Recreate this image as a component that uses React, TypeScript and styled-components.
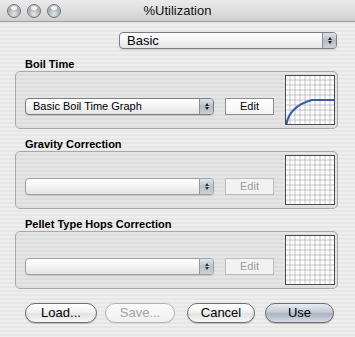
import React from 'react';
import styled, { createGlobalStyle, css } from 'styled-components';

const GlobalStyle = createGlobalStyle`
    html, body {
        margin: 0;
        padding: 0;
        background: #ececec;
    }
    body {
        font-family: "Liberation Sans", "DejaVu Sans", sans-serif;
        color: #000;
    }
`;

const Window = styled.div`
    width: 355px;
    height: 337px;
    display: flex;
    flex-direction: column;
    overflow: hidden;
    background: repeating-linear-gradient(
        to bottom,
        #eeeeee 0px,
        #eeeeee 2px,
        #e6e6e6 2px,
        #e6e6e6 4px
    );
`;

const TitleBar = styled.div`
    height: 21px;
    border-bottom: 1px solid #9c9c9c;
    display: flex;
    align-items: center;
    padding-left: 7px;
    gap: 6px;
    position: relative;
    background: linear-gradient(to bottom, #eaeaea 0%, #dedede 50%, #cfcfcf 100%);
`;

const Light = styled.span`
    width: 14px;
    height: 14px;
    border-radius: 50%;
    box-sizing: border-box;
    border: 1px solid #6f7378;
    background: radial-gradient(
        circle at 50% 75%,
        #e4e7ea 0%,
        #a9afb5 55%,
        #8a9096 100%
    );
    box-shadow: inset 0 1px 0 rgba(255, 255, 255, 0.6);
    position: relative;
    &::after {
        content: '';
        position: absolute;
        left: 3px;
        top: 1px;
        width: 6px;
        height: 4px;
        border-radius: 50%;
        background: rgba(255, 255, 255, 0.85);
    }
`;

const Title = styled.div`
    position: absolute;
    left: 0;
    right: 0;
    top: 3px;
    text-align: center;
    font-size: 13px;
    color: #111;
    pointer-events: none;
`;

const Content = styled.div`
    display: flex;
    flex-direction: column;
    padding: 10px 17px 0 15px;
`;

const TopRow = styled.div`
    display: flex;
    justify-content: flex-end;
    padding-right: 1px;
`;

const Popup = styled.div<{ $width: number; $disabled?: boolean }>`
    width: ${(p) => p.$width}px;
    height: 17px;
    box-sizing: border-box;
    border: 1px solid ${(p) => (p.$disabled ? '#a0a0a0' : '#7d7d7d')};
    border-radius: 4px;
    display: flex;
    overflow: hidden;
    background: linear-gradient(to bottom, #ffffff 0%, #f4f4f4 50%, #e4e4e4 100%);
    box-shadow: 0 1px 1px rgba(0, 0, 0, 0.12);
`;

const PopupLabel = styled.div<{ $size: number }>`
    flex: 1;
    font-size: ${(p) => p.$size}px;
    line-height: 15px;
    padding-left: 7px;
    white-space: nowrap;
`;

const PopupArrows = styled.div<{ $disabled?: boolean }>`
    width: 13px;
    border-left: 1px solid #8a9098;
    display: flex;
    flex-direction: column;
    align-items: center;
    justify-content: center;
    gap: 1px;
    background: linear-gradient(to bottom, #dfe4ea 0%, #b4bcc6 50%, #c9d0d8 100%);
    ${(p) =>
        p.$disabled &&
        css`
            opacity: 0.9;
        `}
`;

const Arrow = styled.span<{ $up?: boolean }>`
    width: 0;
    height: 0;
    border-left: 2.5px solid transparent;
    border-right: 2.5px solid transparent;
    ${(p) =>
        p.$up
            ? css`border-bottom: 3px solid #222;`
            : css`border-top: 3px solid #222;`}
`;

const Section = styled.div<{ $top: number }>`
    display: flex;
    flex-direction: column;
    margin-top: ${(p) => p.$top}px;
`;

const SectionLabel = styled.div`
    font-size: 11px;
    font-weight: bold;
    line-height: 12px;
    padding-left: 10px;
    margin-bottom: 1px;
`;

const GroupBox = styled.div`
    height: 58px;
    box-sizing: border-box;
    border: 1px solid #a9a9a9;
    border-radius: 5px;
    background: rgba(0, 0, 0, 0.035);
    display: flex;
    align-items: flex-end;
    padding: 3px 2px 3px 9px;
    gap: 11px;
`;

const Controls = styled.div`
    display: flex;
    gap: 11px;
    align-items: center;
    margin-bottom: 10px;
`;

const EditButton = styled.div<{ $disabled?: boolean }>`
    width: 49px;
    height: 17px;
    box-sizing: border-box;
    border: 1px solid ${(p) => (p.$disabled ? '#bdbdbd' : '#8e8e8e')};
    background: ${(p) =>
        p.$disabled
            ? '#f2f2f2'
            : 'linear-gradient(to bottom, #ffffff 0%, #f3f3f3 100%)'};
    font-size: 11px;
    line-height: 15px;
    text-align: center;
    color: ${(p) => (p.$disabled ? '#9a9a9a' : '#000')};
`;

const Graph = styled.svg`
    display: block;
    width: 50px;
    height: 50px;
    background: #fff;
`;

const ButtonRow = styled.div`
    display: flex;
    margin-top: 14px;
    padding-left: 10px;
`;

const PushButton = styled.div<{
    $width: number;
    $left: number;
    $disabled?: boolean;
    $default?: boolean;
}>`
    width: ${(p) => p.$width}px;
    margin-left: ${(p) => p.$left}px;
    height: 20px;
    box-sizing: border-box;
    border-radius: 10px;
    border: 1px solid ${(p) => (p.$disabled ? '#b3b3b3' : '#6e6e6e')};
    font-size: 13px;
    line-height: 18px;
    text-align: center;
    color: ${(p) => (p.$disabled ? '#a2a2a2' : '#000')};
    background: ${(p) =>
        p.$default
            ? 'linear-gradient(to bottom, #e9edf2 0%, #c2cad4 45%, #a9b3bf 55%, #d5dce4 100%)'
            : p.$disabled
            ? 'linear-gradient(to bottom, #fafafa 0%, #f0f0f0 100%)'
            : 'linear-gradient(to bottom, #ffffff 0%, #f1f1f1 45%, #e2e2e2 55%, #f6f6f6 100%)'};
    box-shadow: 0 1px 1px rgba(0, 0, 0, ${(p) => (p.$disabled ? 0.06 : 0.2)});
`;

function GridGraph({ curve }: { curve?: boolean }) {
    const lines = [];
    for (let i = 1; i < 10; i++) {
        const v = i * 5;
        lines.push(<line key={'v' + i} x1={v} y1={0} x2={v} y2={50} />);
        lines.push(<line key={'h' + i} x1={0} y1={v} x2={50} y2={v} />);
    }
    return (
        <Graph viewBox="0 0 50 50">
            <g stroke="#b4b4b4" strokeWidth={0.8}>
                {lines}
            </g>
            {curve && (
                <path
                    d="M1.5 49 C3 39 11 29 27 25 L49 25"
                    fill="none"
                    stroke="#3a5aa8"
                    strokeWidth={2}
                />
            )}
            <rect
                x={0.5}
                y={0.5}
                width={49}
                height={49}
                fill="none"
                stroke="#4a4a4a"
            />
        </Graph>
    );
}

function PopupMenu(props: {
    width: number;
    label?: string;
    size?: number;
    disabled?: boolean;
}) {
    return (
        <Popup $width={props.width} $disabled={props.disabled}>
            <PopupLabel $size={props.size || 11}>{props.label}</PopupLabel>
            <PopupArrows $disabled={props.disabled}>
                <Arrow $up />
                <Arrow />
            </PopupArrows>
        </Popup>
    );
}

const sections = [
    { title: 'Boil Time', value: 'Basic Boil Time Graph', active: true, top: 9 },
    { title: 'Gravity Correction', value: '', active: false, top: 9 },
    { title: 'Pellet Type Hops Correction', value: '', active: false, top: 9 },
];

export default class App extends React.Component<{}, {}> {
    render() {
        return (
            <Window>
                <GlobalStyle />
                <TitleBar>
                    <Light />
                    <Light />
                    <Light />
                    <Title>%Utilization</Title>
                </TitleBar>
                <Content>
                    <TopRow>
                        <PopupMenu width={218} label="Basic" size={13} />
                    </TopRow>
                    {sections.map((s) => (
                        <Section key={s.title} $top={s.top}>
                            <SectionLabel>{s.title}</SectionLabel>
                            <GroupBox>
                                <Controls>
                                    <PopupMenu
                                        width={189}
                                        label={s.value}
                                        disabled={!s.active}
                                    />
                                    <EditButton $disabled={!s.active}>Edit</EditButton>
                                </Controls>
                                <GridGraph curve={s.active} />
                            </GroupBox>
                        </Section>
                    ))}
                    <ButtonRow>
                        <PushButton $width={72} $left={0}>Load...</PushButton>
                        <PushButton $width={70} $left={8} $disabled>Save...</PushButton>
                        <PushButton $width={68} $left={12}>Cancel</PushButton>
                        <PushButton $width={69} $left={10} $default>Use</PushButton>
                    </ButtonRow>
                </Content>
            </Window>
        );
    }
}
